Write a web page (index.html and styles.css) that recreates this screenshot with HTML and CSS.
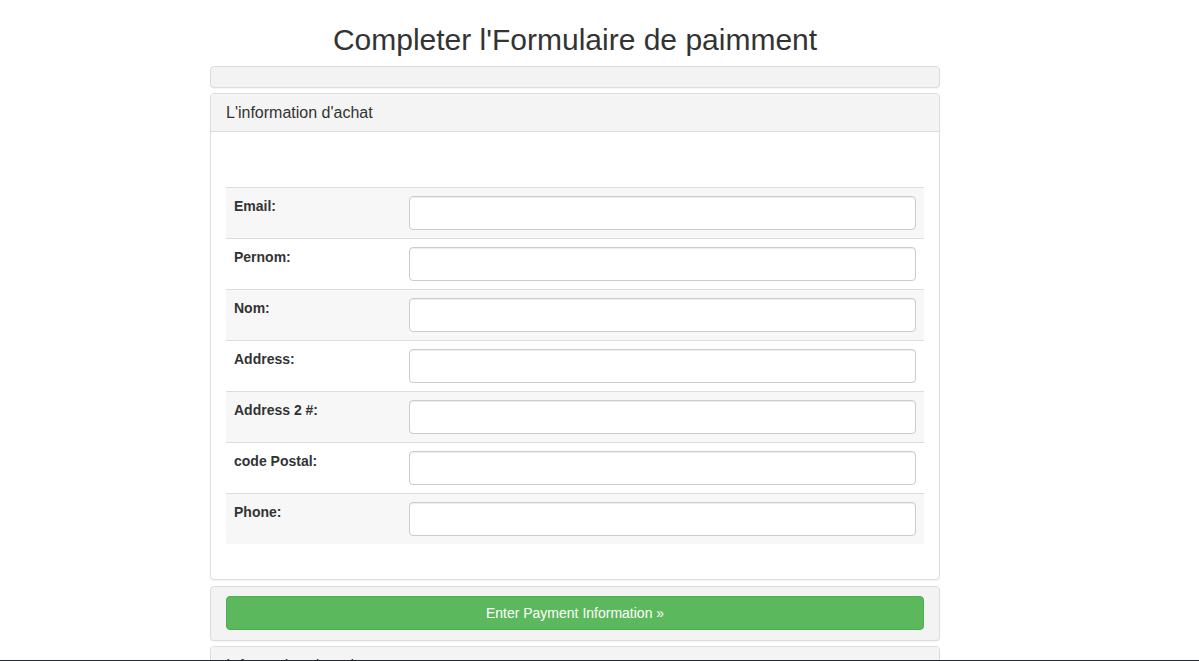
FILE: index.html
```html
<!DOCTYPE html>
<html lang="fr">
<head>
<meta charset="utf-8">
<title>Completer l'Formulaire de paimment</title>
<link rel="stylesheet" href="styles.css">
</head>
<body>
<div class="page">
  <h2 class="title">Completer l'Formulaire de paimment</h2>
  <div class="panel panel-empty"></div>
  <div class="panel">
    <div class="panel-heading">L'information d'achat</div>
    <div class="panel-body">
      <div class="spacer"></div>
      <table class="form-table">
        <tr class="odd"><td class="label">Email:</td><td class="field"><input type="text" class="input"></td></tr>
        <tr><td class="label">Pernom:</td><td class="field"><input type="text" class="input"></td></tr>
        <tr class="odd"><td class="label">Nom:</td><td class="field"><input type="text" class="input"></td></tr>
        <tr><td class="label">Address:</td><td class="field"><input type="text" class="input"></td></tr>
        <tr class="odd"><td class="label">Address 2 #:</td><td class="field"><input type="text" class="input"></td></tr>
        <tr><td class="label">code Postal:</td><td class="field"><input type="text" class="input"></td></tr>
        <tr class="odd"><td class="label">Phone:</td><td class="field"><input type="text" class="input"></td></tr>
      </table>
    </div>
  </div>
  <div class="panel panel-action">
    <button type="button" class="btn-success">Enter Payment Information &raquo;</button>
  </div>
  <div class="panel">
    <div class="panel-heading">Information de paiement</div>
    <div class="panel-body">
      <div class="spacer"></div>
    </div>
  </div>
</div>
<div class="bottom-edge"></div>
</body>
</html>
```
FILE: styles.css
```css
html, body {
  margin: 0;
  padding: 0;
  background: #fff;
}
body {
  font-family: "Liberation Sans", Arial, Helvetica, sans-serif;
  font-size: 14px;
  line-height: 1.42857;
  color: #333;
  overflow: hidden;
}
.page {
  width: 730px;
  margin-left: 210px;
}
.title {
  font-size: 30px;
  font-weight: 500;
  line-height: 33px;
  margin: 23px 0 10px;
  text-align: center;
  color: #333;
}
.panel {
  border: 1px solid #ddd;
  border-radius: 4px;
  background: #fff;
  margin-bottom: 5px;
  box-shadow: 0 1px 1px rgba(0, 0, 0, 0.05);
}
.panel-empty {
  height: 20px;
  background: #f3f3f3;
}
.panel-heading {
  background: #f4f4f4;
  border-bottom: 1px solid #ddd;
  border-radius: 3px 3px 0 0;
  padding: 10px 15px;
  font-size: 16px;
  line-height: 17px;
  color: #333;
}
.panel-body {
  padding: 15px;
}
.spacer {
  height: 40px;
}
.form-table {
  width: 100%;
  border-collapse: collapse;
  border-spacing: 0;
  margin-bottom: 20px;
}
.form-table td {
  padding: 8px;
  border-top: 1px solid #ddd;
  vertical-align: top;
  line-height: 20px;
}
.form-table tr.odd td {
  background: #f7f7f7;
}
.form-table td.label {
  width: 25%;
  font-weight: bold;
  color: #333;
}
.input {
  display: block;
  box-sizing: border-box;
  width: 100%;
  height: 34px;
  margin: 0;
  padding: 6px 12px;
  font: inherit;
  color: #555;
  background: #fff;
  border: 1px solid #ccc;
  border-radius: 4px;
  box-shadow: inset 0 1px 1px rgba(0, 0, 0, 0.075);
}
.panel-action {
  background: #f3f3f3;
  margin-top: 6px;
  padding: 9px 15px 10px;
}
.btn-success {
  display: block;
  width: 100%;
  height: 34px;
  box-sizing: border-box;
  padding: 6px 12px;
  font-family: "Liberation Sans", Arial, sans-serif;
  font-size: 14px;
  line-height: 20px;
  color: #fff;
  text-align: center;
  background: #5cb85c;
  border: 1px solid #4cae4c;
  border-radius: 4px;
  cursor: pointer;
}
.bottom-edge {
  position: fixed;
  left: 0;
  right: 0;
  bottom: 0;
  height: 1px;
  background: #1f2833;
}
```
